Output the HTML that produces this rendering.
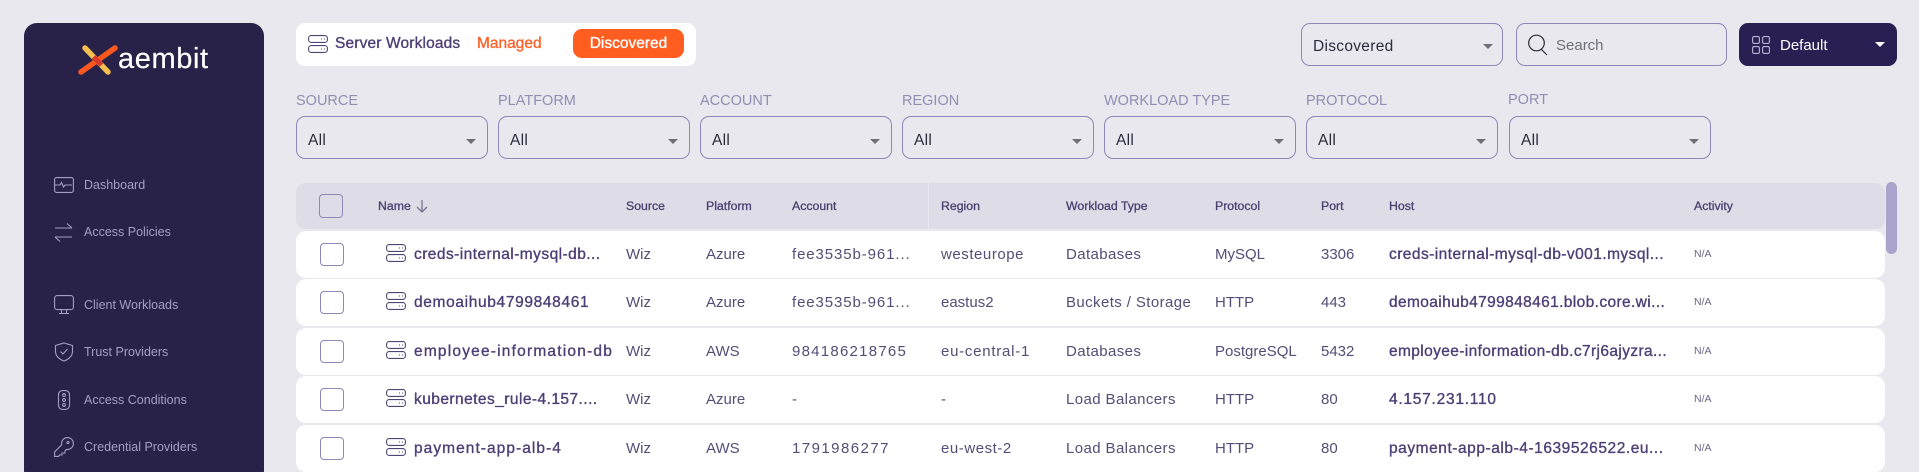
<!DOCTYPE html>
<html><head><meta charset="utf-8"><style>
*{box-sizing:border-box}
html,body{margin:0;padding:0;width:1919px;height:472px;overflow:hidden;background:#e8e8ee;font-family:"Liberation Sans",sans-serif}
#w{position:relative;width:1919px;height:472px;overflow:hidden;background:#e8e8ee}
.a{position:absolute;white-space:nowrap}
#side{left:24px;top:23px;width:240px;height:460px;background:#282248;border-radius:13px}
.nav{left:84px;font-size:12.5px;color:#a49fc4;line-height:16px}
.ni{position:absolute;left:54px;fill:none;stroke:#a49fc4;stroke-width:1.1}
.lbl{top:92px;font-size:14.5px;line-height:18px;color:#918db2}
.sel{top:116px;height:43px;border:1px solid #8d88b8;border-radius:9px}
.sel b{position:absolute;left:11px;top:0;font-weight:400;font-size:15.5px;line-height:47px;color:#2b2b3a;letter-spacing:.3px}
.sel i{position:absolute;right:11px;top:22px;width:0;height:0;border-left:5.5px solid transparent;border-right:5.5px solid transparent;border-top:5.5px solid #6f6f78}
.th{top:183px;height:46px;line-height:46px;font-size:12.3px;color:#4a3f70;-webkit-text-stroke:.3px #4a3f70}
.row{position:absolute;left:296px;width:1589px;height:47px;background:#fff;border-radius:10px}
.row span{position:absolute;top:0;line-height:47px;white-space:nowrap;font-size:15px;color:#554d76}
.row .n,.row .h{font-size:15.5px;color:#4d3f75;-webkit-text-stroke:.35px #4d3f75;letter-spacing:.45px}
.row .n{left:118px}.row .h{left:1093px}
.row .s{left:330px}.row .p{left:410px}.row .c{left:496px;letter-spacing:.9px}.row .r{left:645px;letter-spacing:.55px}.row .t{left:770px;letter-spacing:.4px}.row .o{left:919px}.row .q{left:1025px}
.row .x{left:1398px;font-size:10.5px;color:#6a6588}
.row em{position:absolute;left:24px;top:12px;width:24px;height:23px;border:1px solid #8d88b8;border-radius:4px}
.row svg{position:absolute;left:90px;top:13px}
</style></head><body><div id="w">
<div id="side" class="a"></div>
<svg class="a" style="left:78px;top:44px" width="42" height="32" viewBox="0 0 42 32"><path d="M7 4L30 28" stroke="#f6c04f" stroke-width="5.5" stroke-linecap="round"/><path d="M37 4L3 28" stroke="#f9581f" stroke-width="5.5" stroke-linecap="round"/><path d="M15.500 13L23.500 21" stroke="#d8392c" stroke-width="5"/></svg>
<div class="a" style="left:118px;top:42px;font-size:29px;line-height:34px;color:#fff;letter-spacing:.6px;-webkit-text-stroke:.2px #fff">aembit</div>

<svg class="ni" style="top:177px" width="20" height="16" viewBox="0 0 20 16"><rect x=".6" y=".6" width="18.800" height="14.800" rx="2"/><path d="M1 8h5l1.500-2.500 2 4.500 1.500-2h7"/></svg>
<div class="a nav" style="top:177px">Dashboard</div>
<svg class="ni" style="top:222px" width="20" height="20" viewBox="0 0 20 20"><path d="M1 6h17M13 1.500L18 6M1 15h17M1 15l5 4.500"/></svg>
<div class="a nav" style="top:224px">Access Policies</div>
<svg class="ni" style="top:295px" width="20" height="20" viewBox="0 0 20 20"><rect x=".6" y=".6" width="18.800" height="14" rx="2.500"/><path d="M7.500 15v3M12.500 15v3M5 18.500h10"/></svg>
<div class="a nav" style="top:297px">Client Workloads</div>
<svg class="ni" style="top:342px" width="20" height="20" viewBox="0 0 20 20"><path d="M10 1l8.500 2.500v6c0 4.500-4 8-8.500 9.500C5.500 17.500 1.500 14 1.500 9.500v-6z"/><path d="M6.500 9.500l2.500 2.500 4.500-5"/></svg>
<div class="a nav" style="top:344px">Trust Providers</div>
<svg class="ni" style="top:390px" width="20" height="20" viewBox="0 0 20 20"><rect x="4.500" y=".6" width="11" height="18.800" rx="4"/><circle cx="10" cy="5" r="1.400"/><circle cx="10" cy="10" r="1.400"/><circle cx="10" cy="15" r="1.400"/></svg>
<div class="a nav" style="top:392px">Access Conditions</div>
<svg class="ni" style="top:437px" width="20" height="20" viewBox="0 0 20 20"><path d="M.6 19.400v-4.500l7-7C7 3.500 10 .6 13.500.6c3.300 0 5.900 2.700 5.900 5.900 0 3.500-3.200 6.500-7 6l-1.500 1.500v2H8v2H5.500l-1 1.400z"/><circle cx="14" cy="5.500" r="1"/></svg>
<div class="a nav" style="top:439px">Credential Providers</div>

<div class="a" style="left:296px;top:23px;width:400px;height:43px;background:#fff;border-radius:9px"></div>
<svg class="a" style="left:308px;top:35px" width="20" height="18" viewBox="0 0 20 18" fill="none" stroke="#4f4575" stroke-width="1.100"><rect x=".6" y=".6" width="18.800" height="6.800" rx="2.500"/><rect x=".6" y="10.600" width="18.800" height="6.800" rx="2.500"/><path d="M13 4h1M16 4h1M13 14h1M16 14h1"/></svg>
<div class="a" style="left:335px;top:34px;font-size:15.5px;line-height:20px;color:#4d3f75;-webkit-text-stroke:.35px #4d3f75;letter-spacing:.15px">Server Workloads</div>
<div class="a" style="left:477px;top:34px;font-size:15.5px;line-height:20px;color:#f9632a;-webkit-text-stroke:.35px #f9632a">Managed</div>
<div class="a" style="left:573px;top:29px;width:111px;height:29px;background:#ff5e20;border-radius:9px;color:#fff;font-size:15.5px;line-height:29px;text-align:center;-webkit-text-stroke:.35px #fff">Discovered</div>

<div class="a sel" style="left:1301px;top:23px;width:202px"><b style="line-height:46px">Discovered</b><i style="top:20px;right:9px"></i></div>
<div class="a sel" style="left:1516px;top:23px;width:211px"></div>
<svg class="a" style="left:1527px;top:34px" width="22" height="22" viewBox="0 0 22 22" fill="none" stroke="#2b2b3a" stroke-width="1.200"><circle cx="9.500" cy="9" r="7.800"/><path d="M14.500 15.500L20 21"/></svg>
<div class="a" style="left:1556px;top:36px;font-size:15px;line-height:20px;color:#6f6f78">Search</div>
<div class="a" style="left:1739px;top:23px;width:158px;height:43px;background:#2a1f52;border-radius:9px"></div>
<svg class="a" style="left:1752px;top:36px" width="18" height="18" viewBox="0 0 18 18" fill="none" stroke="#b9b5d4" stroke-width="1.100"><rect x=".6" y=".6" width="6.800" height="6.800" rx="1.500"/><rect x="10.600" y=".6" width="6.800" height="6.800" rx="1.500"/><rect x=".6" y="10.600" width="6.800" height="6.800" rx="1.500"/><rect x="10.600" y="10.600" width="6.800" height="6.800" rx="1.500"/></svg>
<div class="a" style="left:1780px;top:36px;font-size:15px;line-height:20px;color:#fff">Default</div>
<div class="a" style="left:1875px;top:42px;width:0;height:0;border-left:5.5px solid transparent;border-right:5.5px solid transparent;border-top:5.5px solid #fff"></div>

<div class="a lbl" style="left:296px">SOURCE</div><div class="a sel" style="left:296px;width:192px"><b>All</b><i></i></div>
<div class="a lbl" style="left:498px">PLATFORM</div><div class="a sel" style="left:498px;width:192px"><b>All</b><i></i></div>
<div class="a lbl" style="left:700px">ACCOUNT</div><div class="a sel" style="left:700px;width:192px"><b>All</b><i></i></div>
<div class="a lbl" style="left:902px">REGION</div><div class="a sel" style="left:902px;width:192px"><b>All</b><i></i></div>
<div class="a lbl" style="left:1104px">WORKLOAD TYPE</div><div class="a sel" style="left:1104px;width:192px"><b>All</b><i></i></div>
<div class="a lbl" style="left:1306px">PROTOCOL</div><div class="a sel" style="left:1306px;width:192px"><b>All</b><i></i></div>
<div class="a lbl" style="left:1508px;top:91px">PORT</div><div class="a sel" style="left:1509px;width:202px"><b>All</b><i></i></div>

<div class="a" style="left:296px;top:183px;width:1589px;height:46px;background:#dedce6;border-radius:10px"></div>
<div class="a" style="left:928px;top:183px;width:1px;height:46px;background:#e8e8ee"></div>
<div class="a" style="left:319px;top:194px;width:24px;height:24px;border:1px solid #8d88b8;border-radius:4px"></div>
<div class="a th" style="left:378px">Name</div>
<svg class="a" style="left:416px;top:199px" width="12" height="14" viewBox="0 0 12 14" fill="none" stroke="#77738f" stroke-width="1.300"><path d="M6 1v12M1 8l5 5 5-5"/></svg>
<div class="a th" style="left:626px">Source</div>
<div class="a th" style="left:706px">Platform</div>
<div class="a th" style="left:792px">Account</div>
<div class="a th" style="left:941px">Region</div>
<div class="a th" style="left:1066px">Workload Type</div>
<div class="a th" style="left:1215px">Protocol</div>
<div class="a th" style="left:1321px">Port</div>
<div class="a th" style="left:1389px">Host</div>
<div class="a th" style="left:1694px">Activity</div>
<div class="a" style="left:1886px;top:182px;width:11px;height:72px;background:#aaa4cc;border-radius:6px"></div>

<div class="row" style="top:231px"><em></em><svg width="20" height="18" viewBox="0 0 20 18" fill="none" stroke="#4f4575" stroke-width="1.100"><rect x=".6" y=".6" width="18.800" height="6.800" rx="2.500"/><rect x=".6" y="10.600" width="18.800" height="6.800" rx="2.500"/><path d="M13 4h1M16 4h1M13 14h1M16 14h1"/></svg><span class="n">creds-internal-mysql-db...</span><span class="s">Wiz</span><span class="p">Azure</span><span class="c">fee3535b-961...</span><span class="r">westeurope</span><span class="t">Databases</span><span class="o">MySQL</span><span class="q">3306</span><span class="h">creds-internal-mysql-db-v001.mysql...</span><span class="x">N/A</span></div>
<div class="row" style="top:279px"><em></em><svg width="20" height="18" viewBox="0 0 20 18" fill="none" stroke="#4f4575" stroke-width="1.100"><rect x=".6" y=".6" width="18.800" height="6.800" rx="2.500"/><rect x=".6" y="10.600" width="18.800" height="6.800" rx="2.500"/><path d="M13 4h1M16 4h1M13 14h1M16 14h1"/></svg><span class="n" style="letter-spacing:.65px">demoaihub4799848461</span><span class="s">Wiz</span><span class="p">Azure</span><span class="c">fee3535b-961...</span><span class="r" style="letter-spacing:0">eastus2</span><span class="t">Buckets / Storage</span><span class="o">HTTP</span><span class="q">443</span><span class="h" style="letter-spacing:.38px">demoaihub4799848461.blob.core.wi...</span><span class="x">N/A</span></div>
<div class="row" style="top:328px"><em></em><svg width="20" height="18" viewBox="0 0 20 18" fill="none" stroke="#4f4575" stroke-width="1.100"><rect x=".6" y=".6" width="18.800" height="6.800" rx="2.500"/><rect x=".6" y="10.600" width="18.800" height="6.800" rx="2.500"/><path d="M13 4h1M16 4h1M13 14h1M16 14h1"/></svg><span class="n" style="letter-spacing:1.2px">employee-information-db</span><span class="s">Wiz</span><span class="p">AWS</span><span class="c" style="letter-spacing:1.25px">984186218765</span><span class="r" style="letter-spacing:.75px">eu-central-1</span><span class="t">Databases</span><span class="o">PostgreSQL</span><span class="q">5432</span><span class="h" style="letter-spacing:.38px">employee-information-db.c7rj6ajyzra...</span><span class="x">N/A</span></div>
<div class="row" style="top:376px"><em></em><svg width="20" height="18" viewBox="0 0 20 18" fill="none" stroke="#4f4575" stroke-width="1.100"><rect x=".6" y=".6" width="18.800" height="6.800" rx="2.500"/><rect x=".6" y="10.600" width="18.800" height="6.800" rx="2.500"/><path d="M13 4h1M16 4h1M13 14h1M16 14h1"/></svg><span class="n">kubernetes_rule-4.157....</span><span class="s">Wiz</span><span class="p">Azure</span><span class="c">-</span><span class="r">-</span><span class="t">Load Balancers</span><span class="o">HTTP</span><span class="q">80</span><span class="h" style="letter-spacing:.75px">4.157.231.110</span><span class="x">N/A</span></div>
<div class="row" style="top:425px"><em></em><svg width="20" height="18" viewBox="0 0 20 18" fill="none" stroke="#4f4575" stroke-width="1.100"><rect x=".6" y=".6" width="18.800" height="6.800" rx="2.500"/><rect x=".6" y="10.600" width="18.800" height="6.800" rx="2.500"/><path d="M13 4h1M16 4h1M13 14h1M16 14h1"/></svg><span class="n" style="letter-spacing:1.05px">payment-app-alb-4</span><span class="s">Wiz</span><span class="p">AWS</span><span class="c" style="letter-spacing:1.45px">1791986277</span><span class="r">eu-west-2</span><span class="t">Load Balancers</span><span class="o">HTTP</span><span class="q">80</span><span class="h" style="letter-spacing:.55px">payment-app-alb-4-1639526522.eu...</span><span class="x">N/A</span></div>
</div></body></html>
